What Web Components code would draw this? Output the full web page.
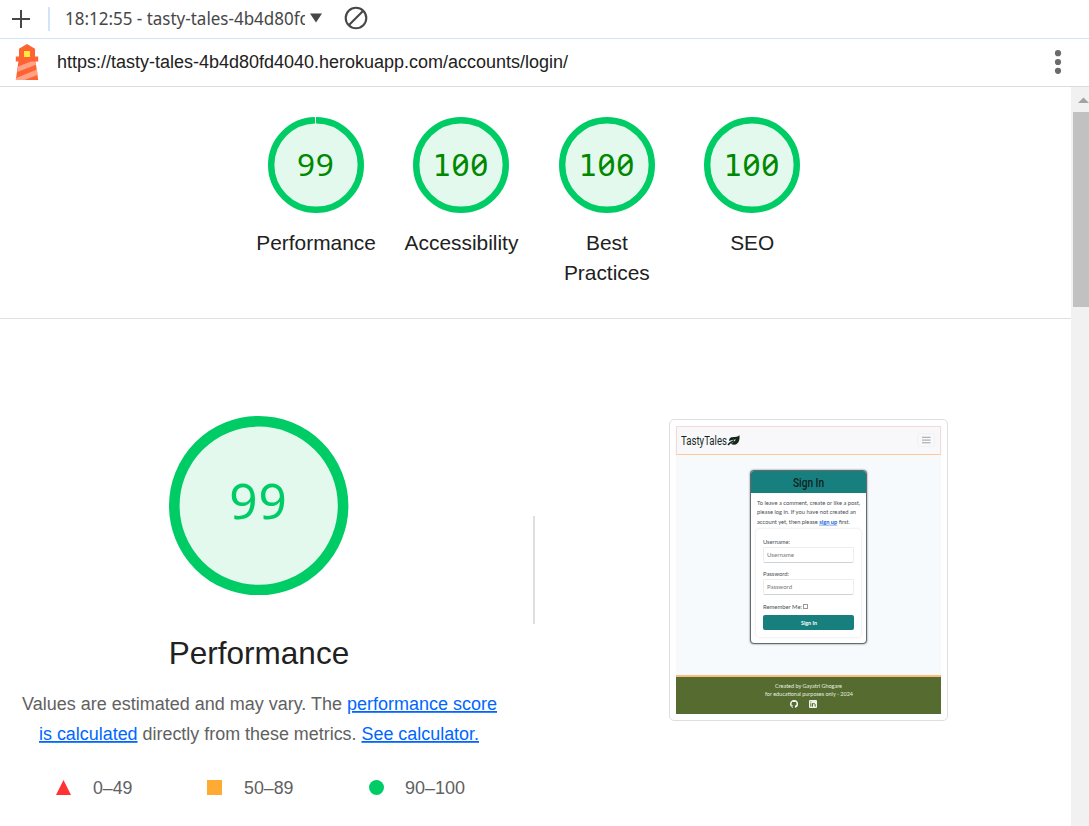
<!DOCTYPE html>
<html lang="en"><head><meta charset="utf-8"><title>Lighthouse</title>
<style>html,body{margin:0;height:100%;overflow:hidden;background:#fff;font-family:"Liberation Sans",Arial,sans-serif;color:#212121}</style></head>
<body><report-app></report-app>
<script>
const define=(name,html,fn)=>customElements.define(name,class extends HTMLElement{
  constructor(){super();this.attachShadow({mode:'open'})}
  connectedCallback(){this.shadowRoot.innerHTML=fn?fn(this):html}
});
const at=(e,n,d)=>e.getAttribute(n)||d;

/* One line of text set to an exact width; b is its baseline inside the box */
define('fit-text','',e=>{
  const w=at(e,'w'),h=at(e,'h'),b=at(e,'b'),s=at(e,'s');
  return `<style>:host{display:block;width:${w}px;height:${h}px;flex:none}svg{display:block;overflow:visible}</style>
  <svg width="${w}" height="${h}"><text x="0" y="${b}" font-size="${s}" textLength="${w}" lengthAdjust="spacingAndGlyphs" fill="currentColor">${e.innerHTML}</text></svg>`});

define('tool-bar',`<style>:host{display:flex;align-items:center;height:38px;border-bottom:1px solid #d3e3fd;color:#474747;font-family:"Noto Sans","Open Sans",sans-serif}
.plus{margin-left:12px;width:18px;height:18px}.sep{width:2px;height:24px;background:#d3e3fd;margin:0 15px 0 18px}
.t{width:240px;overflow:hidden}svg{flex:none}</style>
<svg class="plus" viewBox="0 0 18 18"><path d="M9 0v18M0 9h18" stroke="#474747" stroke-width="2"/></svg><div class="sep"></div>
<div class="t"><fit-text w="245" h="36" b="23.500" s="17.500">18:12:55 - tasty-tales-4b4d80fd</fit-text></div>
<svg width="12" height="10" style="margin:-2px 0 0 5px"><path d="M0 .5h12L6 9.500z" fill="#474747"/></svg>
<svg width="24" height="24" style="margin:-2px 0 0 22px"><circle cx="12" cy="12" r="10.300" fill="none" stroke="#474747" stroke-width="2.100"/><path d="M5 19L19 5" stroke="#474747" stroke-width="2.100"/></svg>`);

define('url-bar',`<style>:host{display:flex;align-items:center;box-sizing:border-box;height:48px;padding-bottom:2px;border-bottom:1px solid #dadce0;font-size:18px;color:#212121}
.l{margin-left:15px;margin-right:18px}.m{margin-left:auto;margin-right:27px}</style>
<svg class="l" width="24" height="36" viewBox="0 0 24 36"><path d="M12 0l8 4.800V12.500h3.200V17.500H.8v-5h3.200V4.800z" fill="#ff6233"/><path d="M9 7h6v6H9z" fill="#ffeb3b"/><path d="M3.500 17h17L23.200 36H.8z" fill="#ff6233"/><path d="M3.100 22.500L16 17.500h4.600l.5 3.200L2.300 28zM1.200 34L22 25.500l.7 5.300L9.800 36H.8z" fill="#ffa285"/></svg>
<fit-text w="511" h="22" b="17" s="18">https://tasty-tales-4b4d80fd4040.herokuapp.com/accounts/login/</fit-text>
<svg class="m" width="8" height="24" fill="#6b6b6b"><circle cx="4" cy="3.200" r="3.100"/><circle cx="4" cy="12" r="3.100"/><circle cx="4" cy="20.800" r="3.100"/></svg>`);

define('scroll-bar',`<style>:host{display:flex;flex-direction:column;width:18px;background:#f1f1f1;overflow:hidden}svg{margin:10px 0 0 6px;height:6px;flex:none}i{display:block;margin:9px 0 0 2px;height:195px;background:#c1c1c1}</style>
<svg width="12"><path d="M1 6L6.500 .5L12 6z" fill="#a3a3a3"/></svg><i></i>`);

define('score-gauge','',e=>{
  const size=+at(e,'size'),sw=+at(e,'stroke'),v=at(e,'score'),fs=+at(e,'fs'),c=size/2,r=c-sw/2,adv=+at(e,'adv'),gap=+at(e,'gap','0'),C=2*Math.PI*r;
  const xs=[...v].map((_,i)=>c-.6+(i-(v.length-1)/2)*adv);
  const t=[...v].map((d,i)=>d==='1'?`<tspan x="${xs[i]}" font-family="DejaVu Sans Mono" font-size="${fs*.96}">1</tspan>`:`<tspan x="${xs[i]}">${d}</tspan>`).join('');
  return `<style>:host{display:flex;flex-direction:column;align-items:center;text-align:center}
  svg{display:block;flex:none}text{font-family:"Noto Sans",sans-serif;font-feature-settings:"zero";text-anchor:middle}
  .l{font-size:${at(e,'label')}px;line-height:${at(e,'lh')}px;margin-top:${at(e,'mt')}px}</style>
  <svg width="${size}" height="${size}"><circle cx="${c}" cy="${c}" r="${r}" fill="#e4f9ee"/><circle cx="${c}" cy="${c}" r="${r}" fill="none" stroke="#0c6" stroke-width="${sw}" stroke-dasharray="${C-gap} ${gap}" transform="rotate(-90 ${c} ${c})"/>
  <text y="${at(e,'ty')}" font-size="${fs}" fill="${at(e,'color')}">${t}</text></svg><div class="l"><slot></slot></div>`});

define('score-strip',`<style>:host{display:flex;padding:30px 0 0 243.400px;height:201px;border-bottom:1px solid #e0e0e0}score-gauge{width:145.400px}</style>
${[['99','Performance'],['100','Accessibility'],['100','Best<br>Practices'],['100','SEO']].map(([s,l],i)=>`<score-gauge size="96" stroke="6.400" score="${s}" fs="31.500" ty="59.300" adv="18.800" color="#080" gap="${i?0:1.5}" label="20.900" lh="30" mt="15">${l}</score-gauge>`).join('')}`);

define('perf-summary',`<style>:host{display:flex;flex-direction:column;width:518px;align-items:center}
.d{color:#616161;font-size:18px;margin-top:16px}.r{display:flex;height:30px;justify-content:center}
.k{display:flex;align-items:center;align-self:stretch;margin:28px 0 0 56px;height:22px;color:#616161;font-size:18px}.k svg{flex:none}</style>
<score-gauge size="179.400" stroke="10.600" score="99" fs="49.500" ty="103" adv="29.300" color="#0c6" gap=".6" label="31.500" lh="40" mt="37.600">Performance</score-gauge>
<div class="d"><div class="r"><fit-text w="475" h="30" b="21" s="18">Values are estimated and may vary. The <tspan fill="#0066ff" text-decoration="underline">performance score</tspan></fit-text></div>
<div class="r"><fit-text w="440" h="30" b="21" s="18"><tspan fill="#0066ff" text-decoration="underline">is calculated</tspan> directly from these metrics. <tspan fill="#0066ff" text-decoration="underline">See calculator.</tspan></fit-text></div></div>
<div class="k"><svg width="15" height="15"><path d="M0 15L7.500 0L15 15z" fill="#f33"/></svg><fit-text style="margin-left:21.500px" w="39.500" h="22" b="17" s="18">0–49</fit-text>
<svg style="margin-left:75px" width="15" height="15"><path d="M0 0h15v15H0z" fill="#fa3"/></svg><fit-text style="margin-left:21.500px" w="49.500" h="22" b="17" s="18">50–89</fit-text>
<svg style="margin-left:76px" width="15" height="15"><circle cx="7.500" cy="7.500" r="7.500" fill="#0c6"/></svg><fit-text style="margin-left:20.500px" w="60" h="22" b="17" s="18">90–100</fit-text></div>`);

define('sign-card',`<style>:host{display:block;box-sizing:border-box;width:117px;height:174px;border:1px solid #626b6d;border-radius:4px;background:#fff;box-shadow:0 0 2px #667;overflow:hidden;color:#4a4e51;font-family:Lato,sans-serif}
.h{height:22.500px;background:#17807e;display:flex;justify-content:center;color:#10201f;font-family:Roboto,sans-serif;font-weight:500}
.p{padding:6px 0 0 5.500px;height:30px}.f{margin:0 5px;height:108px;box-sizing:border-box;padding:8.500px 7px 0;border-radius:4px;box-shadow:0 0 3px #ddd}
.i{height:16px;box-sizing:border-box;border:1px solid #ebedef;border-bottom-color:#cfd3d6;border-radius:2px;padding:0 0 0 3px;color:#777}
.b{height:15px;margin-top:3.500px;background:#17807e;border-radius:2px;color:#fff;display:flex;justify-content:center;font-weight:bold}.c{display:flex;align-items:center;margin-top:6px}.c i{width:3px;height:3px;border:.7px solid #999;margin-left:1px}</style>
<div class="h"><fit-text w="31" h="20" b="15.500" s="12.500">Sign In</fit-text></div>
<div class="p"><fit-text w="103" h="8.800" b="6.300" s="5.700">To leave a comment, create or like a post,</fit-text><fit-text w="99" h="8.800" b="6.300" s="5.700">please log in. If you have not created an</fit-text><fit-text w="93" h="8.800" b="6.800" s="5.500">account yet, then please <tspan fill="#1565d8" text-decoration="underline" font-weight="bold">sign up</tspan> first.</fit-text></div>
<div class="f"><fit-text w="27" h="9" b="6" s="6">Username:</fit-text><div class="i"><fit-text w="27" h="14" b="9" s="6">Username</fit-text></div>
<fit-text style="margin-top:7px" w="26" h="9" b="6" s="6">Password:</fit-text><div class="i"><fit-text w="25" h="14" b="9" s="6">Password</fit-text></div>
<div class="c"><fit-text w="39" h="11" b="7.500" s="6">Remember Me:</fit-text><i></i></div><div class="b"><fit-text w="16" h="15" b="9.800" s="5.600">Sign In</fit-text></div></div>`);

define('page-shot',`<style>:host{display:flex;flex-direction:column;box-sizing:border-box;width:279px;height:302px;border:1px solid #dedede;border-radius:5px;padding:6px}
.n{display:flex;justify-content:space-between;box-sizing:border-box;height:29px;border:1px solid #f3d9dc;border-bottom:1.500px solid #ffc89c;background:#f8f8fb;padding-left:4px;color:#17281b;font-family:Roboto,sans-serif;box-shadow:0 1px 1px #ffdfc6}
.brand{display:flex}.m{flex:1;background:#f7fafc;display:flex;justify-content:center;padding-top:14.500px}.f{height:37px;background:#556b2f;border-top:2px solid #fdbb7c;color:#e9eee1;font-family:Lato,sans-serif;display:flex;flex-direction:column;align-items:center}.g{display:flex;gap:11px;margin:3px 10px 0 0}</style>
<div class="n"><div class="brand"><fit-text w="46" h="26" b="18" s="12.500">TastyTales</fit-text><svg width="14" height="26"><path d="M1 18C2.500 15.500 4 15 7 13.700" stroke="#14281a" stroke-width="1.500" fill="none"/><path d="M2 14C2 10.500 4 10 8 10Q11 9.800 12.400 8.300C13 11.200 12.300 17.500 7.200 17.800Q5 17.800 4 16.500Q7 15.200 9 12.600Q5 13 2 14z" fill="#14281a"/></svg></div>
<svg width="23" height="26"><rect x=".5" y="6.500" width="17" height="13" rx="2" fill="none" stroke="#f1f1f4"/><path d="M5 10.300h8.500M5 13.100h8.500M5 15.800h8.500" stroke="#92959a" stroke-width=".9"/></svg></div>
<div class="m"><sign-card></sign-card></div>
<div class="f"><fit-text style="margin-top:3px" w="67" h="8" b="7.500" s="5.800">Created by Gayatri Ghogare</fit-text><fit-text w="88" h="9" b="7.500" s="5.800">for educational purposes only - 2024</fit-text>
<div class="g"><svg width="8" height="8" viewBox="0 0 16 16"><path fill="#fff" d="M8 0C3.580 0 0 3.580 0 8c0 3.540 2.290 6.530 5.470 7.590.4.070.55-.17.55-.38v-1.490c-2.230.48-2.690-.95-2.690-.95-.36-.92-.89-1.170-.89-1.170-.73-.49.05-.48.05-.48.81.06 1.230.83 1.230.83.72 1.230 1.880.87 2.340.67.07-.52.280-.88.510-1.080-1.780-.2-3.640-.89-3.640-3.950 0-.87.310-1.590.82-2.150-.08-.2-.36-1.020.08-2.120 0 0 .67-.21 2.200.82a7.600 7.600 0 014 0c1.530-1.040 2.200-.82 2.200-.82.44 1.100.16 1.920.08 2.120.51.56.82 1.270.82 2.150 0 3.070-1.870 3.750-3.650 3.950.29.25.54.73.54 1.480v2.200c0 .21.150.46.550.38A8 8 0 008 0z"/></svg>
<svg width="8" height="8"><rect width="8" height="8" rx="1" fill="#eef2e8"/><path d="M1.800 3.200v3.400M3.500 3.200v3.400M3.500 5C3.500 3 6.200 3 6.200 5v1.600M1.800 1.400v.9" stroke="#556b2f" stroke-width="1" fill="none"/></svg></div></div>`);

define('report-body',`<style>:host{display:block;flex:1}.r{display:flex}.v{width:2px;height:108px;background:#dedede;margin:197px 0 0 15px}page-shot{margin:100px 0 0 134px}perf-summary{padding-top:97px}</style>
<score-strip></score-strip><div class="r"><perf-summary></perf-summary><div class="v"></div><page-shot></page-shot></div>`);

define('report-app',`<style>:host{display:flex;flex-direction:column;width:1089px;height:826px;overflow:hidden}.b{display:flex;flex:1;min-height:0}</style>
<tool-bar></tool-bar><url-bar></url-bar><div class="b"><report-body></report-body><scroll-bar></scroll-bar></div>`);
</script></body></html>
